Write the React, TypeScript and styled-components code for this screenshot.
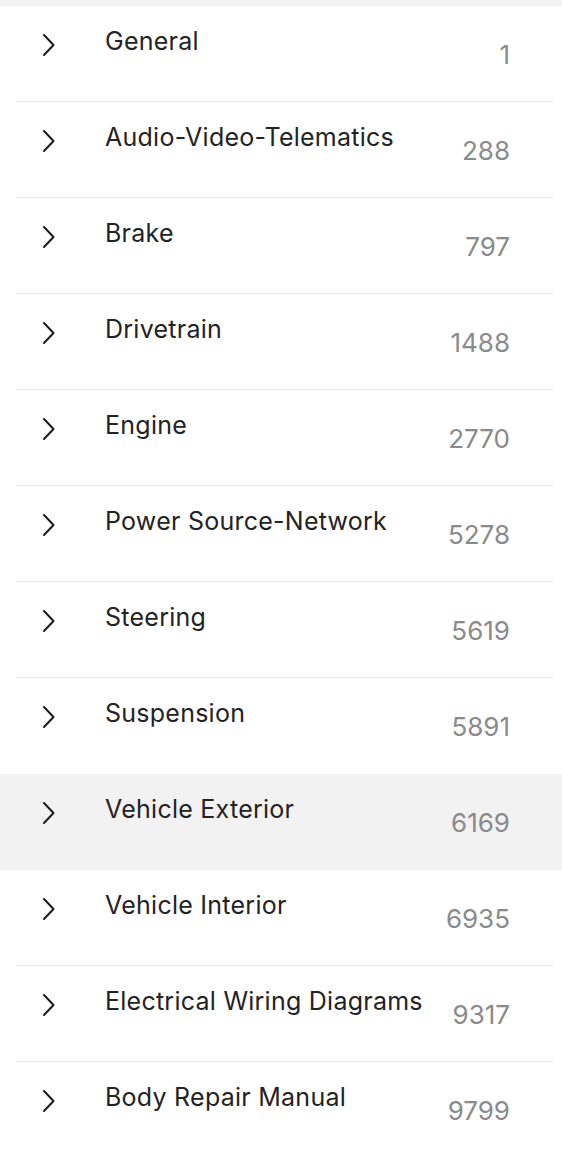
import React from "react";
import styled, { createGlobalStyle } from "styled-components";

const Global = createGlobalStyle`
  html, body { margin: 0; padding: 0; background: #ffffff; }
  body { font-family: Inter, "Noto Sans", "Liberation Sans", sans-serif; -webkit-font-smoothing: antialiased; }
`;

const Page = styled.div`
  width: 562px;
  border-top: 6px solid #f2f2f2;
`;

const List = styled.ul`
  list-style: none;
  margin: 0;
  padding: 0;
`;

const Item = styled.li<{ $active?: boolean }>`
  background: ${(p) => (p.$active ? "#f2f2f2" : "#ffffff")};
  padding-left: 16px;
  padding-right: 9px;
`;

const Row = styled.div<{ $noBorder?: boolean }>`
  display: grid;
  grid-template-columns: 89px 1fr auto;
  height: 95px;
  border-bottom: 1px solid ${(p) => (p.$noBorder ? "transparent" : "#e5e5e5")};
  padding-right: 43px;
`;

const Chevron = styled.span`
  display: flex;
  align-items: flex-start;
  padding-top: 27px;
  padding-left: 24px;
  color: #1d1d1f;
`;

const Title = styled.span`
  font-size: 25px;
  line-height: 30px;
  color: #232325;
  padding-top: 20px;
  letter-spacing: 0.25px;
  white-space: nowrap;
`;

const Count = styled.span`
  font-size: 26px;
  line-height: 30px;
  color: #8a8a8c;
  padding-top: 34px;
  text-align: right;
`;

const ACTIVE = "Vehicle Exterior";

const items: [string, number][] = [
  ["General", 1],
  ["Audio-Video-Telematics", 288],
  ["Brake", 797],
  ["Drivetrain", 1488],
  ["Engine", 2770],
  ["Power Source-Network", 5278],
  ["Steering", 5619],
  ["Suspension", 5891],
  ["Vehicle Exterior", 6169],
  ["Vehicle Interior", 6935],
  ["Electrical Wiring Diagrams", 9317],
  ["Body Repair Manual", 9799],
];

const ChevronIcon = () => (
  <svg width="18" height="24" viewBox="0 0 18 24" fill="none">
    <path
      d="M4 2 L13.5 12 L4 22"
      stroke="currentColor"
      strokeWidth="2"
      strokeLinecap="round"
      strokeLinejoin="round"
    />
  </svg>
);

export default function App() {
  return (
    <Page>
      <Global />
      <List>
        {items.map(([name, n], i) => {
          const active = name === ACTIVE;
          const beforeActive = items[i + 1]?.[0] === ACTIVE;
          const last = i === items.length - 1;
          return (
            <Item key={name} $active={active}>
              <Row $noBorder={active || beforeActive || last}>
                <Chevron>
                  <ChevronIcon />
                </Chevron>
                <Title>{name}</Title>
                <Count>{n}</Count>
              </Row>
            </Item>
          );
        })}
      </List>
    </Page>
  );
}
